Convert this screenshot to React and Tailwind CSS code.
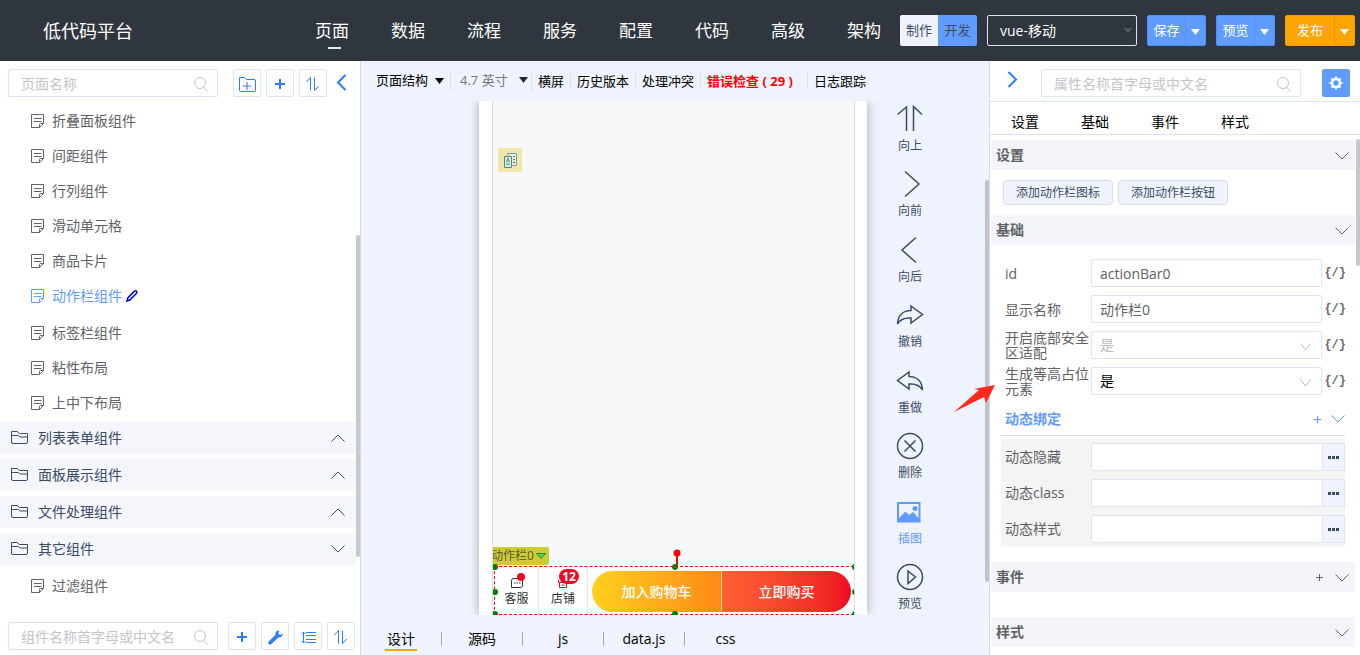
import { useState } from 'react';
import clsx from 'clsx';

const NAV = ['页面', '数据', '流程', '服务', '配置', '代码', '高级', '架构'];

const PAGES = [
  '折叠面板组件',
  '间距组件',
  '行列组件',
  '滑动单元格',
  '商品卡片',
  '动作栏组件',
  '标签栏组件',
  '粘性布局',
  '上中下布局',
];

const GROUPS = [
  { name: '列表表单组件', open: false },
  { name: '面板展示组件', open: false },
  { name: '文件处理组件', open: false },
  { name: '其它组件', open: true, children: ['过滤组件'] },
];

const FILES = ['设计', '源码', 'js', 'data.js', 'css'];
const PROP_TABS = ['设置', '基础', '事件', '样式'];

const BINDINGS = [
  { id: 'bind-hide', label: '动态隐藏' },
  { id: 'bind-class', label: '动态class' },
  { id: 'bind-style', label: '动态样式' },
];

/* Icons */
function Svg({ w, h, children, className, sw = 1 }) {
  return (
    <svg
      width={w}
      height={h}
      viewBox={`0 0 ${w} ${h}`}
      fill="none"
      stroke="currentColor"
      strokeWidth={sw}
      className={clsx('shrink-0', className)}
      aria-hidden="true"
    >
      {children}
    </svg>
  );
}

const NoteIcon = () => (
  <Svg w={13} h={14}>
    <path d="M8.500 13.500h-8V.5h12V9.500zV10.500q0-1 1-1h3M3 4.500h7.500M3 7.500h7.500" />
  </Svg>
);

const FolderIcon = () => (
  <Svg w={17} h={14}>
    <path d="M.5 12V.500h5.500l2.500 2h8v8.500q0 1.500-1.500 1.500H2Q.5 12.500.5 11zM.5 4.500h7l1.500 1.500h7.500" />
  </Svg>
);

const SearchIcon = ({ className }) => (
  <Svg w={14} h={15} className={className}>
    <circle cx="6" cy="6" r="5.500" />
    <path d="M9.500 10l4 4.500" />
  </Svg>
);

const PlusIcon = () => (
  <Svg w={10} h={10} sw={2}>
    <path d="M5 0v10M0 5h10" />
  </Svg>
);

const ThinPlus = () => (
  <Svg w={7} h={7}>
    <path d="M3.500 0v7M0 3.500h7" />
  </Svg>
);

const FolderAddIcon = () => (
  <Svg w={17} h={15}>
    <path d="M3 14.500h-1q-1.500 0-1.500-1.500V.5h5l2 2h7.500q1.500 0 1.500 1.500V13q0 1.500-1.500 1.500H2M8 5v8M4 9h8" />
  </Svg>
);

const SortIcon = () => (
  <Svg w={14} h={14}>
    <path d="M.5 5L4.500.5V13.500M8.500.5v13L13 9" />
  </Svg>
);

const WrenchIcon = () => (
  <Svg w={15} h={15}>
    <path
      d="M14.500 3.500l-2.500 1.500-1.800-1.800L11.500.5C9 0 6.800 2 7.500 4.700L.8 11.400a1.700 1.700 0 0 0 2.600 2.600l6.800-6.600c2.700.6 4.800-1.500 4.300-3.900z"
      fill="currentColor"
      stroke="none"
    />
  </Svg>
);

const LinesIcon = () => (
  <Svg w={15} h={13}>
    <path d="M5 1.500h10M5 4.500h10M5 8.500h10M5 11.500h10M2.500 1v11M.5 3l2-2 2 2M.5 10l2 2 2-2" />
  </Svg>
);

const Chevron = ({ up, className }) => (
  <Svg w={14} h={8} className={className}>
    <path d={up ? 'M.5 7.500L7 1l6.500 6.500' : 'M.5.5L7 7 13.500.5'} />
  </Svg>
);

const SmallChevron = ({ className }) => (
  <Svg w={11} h={8} className={className}>
    <path d="M.5.5l5 6.500 5-6.500" />
  </Svg>
);

const Caret = ({ className }) => (
  <Svg w={9} h={6} className={className}>
    <path d="M0 0h9L4.500 6z" fill="currentColor" stroke="none" />
  </Svg>
);

const BigArrow = ({ left }) => (
  <Svg w={11} h={17} sw={2}>
    <path d={left ? 'M9.500 1L2 8.500 9.500 16' : 'M1.500 1L9 8.500 1.500 16'} />
  </Svg>
);

const TOOL_ICONS = {
  up: <path d="M1.500 9.500L10.500 2V26M17.500 26V1.500L26 9.500" />,
  right: <path d="M9 1.500L23 14 9 26.500" />,
  left: <path d="M20 1.500L6 14l14 12.500" />,
  redo: <path d="M15 5l11.500 8.500L15 22v-5C9 16.500 4 18.500 1.500 23 2 14.500 7 9.500 15 9.500z" />,
  undo: <path d="M13 5L1.500 13.500 13 22v-5c6-.5 11 1.500 13.500 6C26 14.500 21 9.500 13 9.500z" />,
  remove: (
    <>
      <circle cx="14" cy="14" r="12.500" />
      <path d="M8.500 8.500l11 11M19.500 8.500l-11 11" />
    </>
  ),
  image: (
    <>
      <path d="M2 5h21.500v18.500H2z" strokeWidth="2" />
      <path d="M2 21l7.500-7.500 3.500 3.500 4-3 6.500 7v2.500H2z" fill="currentColor" stroke="none" />
      <circle cx="19" cy="10.500" r="2.500" fill="currentColor" stroke="none" />
    </>
  ),
  play: (
    <>
      <circle cx="14" cy="14" r="12.500" />
      <path d="M12 8l7.500 6-7.500 6.500z" />
    </>
  ),
};

const TOOLS = [
  { name: '向上', icon: 'up' },
  { name: '向前', icon: 'right' },
  { name: '向后', icon: 'left' },
  { name: '撤销', icon: 'redo' },
  { name: '重做', icon: 'undo' },
  { name: '删除', icon: 'remove' },
  { name: '插图', icon: 'image', active: true },
  { name: '预览', icon: 'play' },
];

/* Shared controls */
function SearchBox({ label, className }) {
  return (
    <div className={clsx('relative', className)}>
      <input
        type="text"
        aria-label={label}
        placeholder={label}
        className="block h-7 w-full rounded-xs border border-[#dce3f3] bg-white pl-3 pr-8 text-sm placeholder:text-[#c3c5c9] outline-none"
      />
      <SearchIcon className="absolute right-[10px] top-2 text-[#bfc3ca]" />
    </div>
  );
}

function ToolButton({ label, children }) {
  return (
    <button
      aria-label={label}
      className="flex size-7 shrink-0 items-center justify-center rounded-xs border border-[#dce3f3] bg-white pt-[2px] text-[#2d7bff]"
    >
      {children}
    </button>
  );
}

function SplitButton({ label, orange }) {
  return (
    <div
      className={clsx(
        'flex h-[31px] shrink-0 rounded-xs border text-[13px] text-white',
        orange ? 'w-[70px] border-[#f59a00] bg-[#ffa500]' : 'w-[59px] border-[#4a90ff] bg-[#609bff]',
      )}
    >
      <button className="flex-1">{label}</button>
      <button
        aria-label={`${label}选项`}
        className={clsx(
          'flex w-5 items-center justify-center border-l pt-[2px]',
          orange ? 'border-[#e59400]' : 'border-[#4a90ff]',
        )}
      >
        <Caret />
      </button>
    </div>
  );
}

/* Header */
function Header() {
  const [active, setActive] = useState('页面');

  return (
    <header className="flex h-[61px] shrink-0 items-center bg-[#2f363e] pl-[43px] pr-[5px] text-white">
      <h1 className="text-lg">低代码平台</h1>
      <nav className="ml-auto mr-[19px] flex gap-[42px]">
        {NAV.map((item) => (
          <a
            key={item}
            href={`#${item}`}
            onClick={() => setActive(item)}
            className="relative whitespace-nowrap text-[17px]"
          >
            {item}
            {active === item && (
              <span className="absolute -bottom-[6px] left-[13px] h-[2px] w-[13px] bg-[#e3e6f3]" />
            )}
          </a>
        ))}
      </nav>
      <div className="flex shrink-0 gap-[10px]">
        <div className="flex h-[31px] overflow-hidden rounded-xs text-[13px] text-[#3f4b63]">
          <button className="w-[38px] bg-[#eff3fd]">制作</button>
          <button className="w-[39px] bg-[#609bff]">开发</button>
        </div>
        <div className="relative w-[150px]">
          <select
            aria-label="项目类型"
            className="h-[31px] w-full appearance-none rounded-xs border border-[#dce3f3] bg-[#2f363e] pl-3 text-sm text-white"
          >
            <option>vue-移动</option>
          </select>
          <Svg w={8} h={6} sw={2} className="absolute right-[5px] top-3 text-[#5a6068]">
            <path d="M1 1l3 3.500L7 1" />
          </Svg>
        </div>
        <SplitButton label="保存" />
        <SplitButton label="预览" />
        <SplitButton label="发布" orange />
      </div>
    </header>
  );
}

/* Left tree */
function TreeItem({ name, active }) {
  return (
    <li
      className={clsx(
        'flex h-[35px] items-center pl-[31px]',
        active ? 'mb-[2px] text-[#5f9bff]' : 'text-[#606266]',
      )}
    >
      <button className="flex items-center gap-2">
        <NoteIcon />
        <span>{name}</span>
      </button>
      {active && (
        <button aria-label="编辑" className="ml-1 text-[#0000e0]">
          <Svg w={12} h={12} sw={1.5}>
            <path d="M1 11l.8-3L8.500 1.200q1.200-.8 2 0t0 2L3.800 10z" />
          </Svg>
        </button>
      )}
    </li>
  );
}

function Sidebar() {
  return (
    <aside className="flex w-[361px] shrink-0 flex-col border-r border-[#d5d9e0] bg-white">
      <div className="flex items-center gap-[5px] pb-[6px] pl-2 pt-2">
        <SearchBox label="页面名称" className="mr-[10px] w-[210px]" />
        <ToolButton label="新建分组"><FolderAddIcon /></ToolButton>
        <ToolButton label="新建页面"><PlusIcon /></ToolButton>
        <ToolButton label="排序"><SortIcon /></ToolButton>
        <button aria-label="收起" className="-mt-[2px] ml-1 text-[#2d7bff]">
          <BigArrow left />
        </button>
      </div>

      <div className="flex min-h-0 flex-1">
        <div className="flex-1 overflow-hidden text-sm">
          <ul className="pb-[2px]">
            {PAGES.map((name) => (
              <TreeItem key={name} name={name} active={name === '动作栏组件'} />
            ))}
          </ul>
          {GROUPS.map((group) => (
            <section key={group.name} className="mb-[5px]">
              <button className="flex h-8 w-full items-center bg-[#f4f6fb] pl-[11px] pr-[11px] text-[#3b4a66]">
                <FolderIcon />
                <span className="ml-[10px]">{group.name}</span>
                <Chevron up={!group.open} className="ml-auto" />
              </button>
              {group.children && (
                <ul className="pt-[3px]">
                  {group.children.map((name) => (
                    <TreeItem key={name} name={name} />
                  ))}
                </ul>
              )}
            </section>
          ))}
        </div>
        <div className="w-1 pt-[132px]">
          <div className="h-[322px] rounded-xs bg-[#c6c8cb]" />
        </div>
      </div>

      <div className="flex items-center gap-[5px] pb-[5px] pl-2">
        <SearchBox label="组件名称首字母或中文名" className="mr-[5px] w-[210px]" />
        <ToolButton label="新建组件"><PlusIcon /></ToolButton>
        <ToolButton label="工具"><WrenchIcon /></ToolButton>
        <ToolButton label="行距"><LinesIcon /></ToolButton>
        <ToolButton label="组件排序"><SortIcon /></ToolButton>
      </div>
    </aside>
  );
}

/* Canvas */
function Handle({ className }) {
  return <span className={clsx('absolute size-[6px] rounded-full bg-[#008000]', className)} />;
}

function ActionBar() {
  return (
    <div className="relative ml-px flex h-[49px] border border-dashed border-[#ff0000] border-r-0 bg-white">
      <div className="absolute -left-1 -top-5 flex h-[18px] w-[58px] items-center justify-between rounded-r-xs bg-[#cccc33] pr-[3px] text-xs text-[#5a5a30]">
        <span className="whitespace-nowrap">动作栏0</span>
        <Svg w={10} h={6}>
          <path d="M.5.5h9L5 5.500z" fill="#5fd068" stroke="#1d8a35" />
        </Svg>
      </div>
      <Svg w={8} h={18} className="absolute -top-[18px] left-[178px] text-[#ff0000]">
        <circle cx="4" cy="4" r="3.500" fill="currentColor" stroke="none" />
        <path d="M4 4v14" strokeWidth="2" />
      </Svg>

      <button className="relative flex w-11 flex-col items-center border-r border-dotted border-[#d0d0d0] pt-2 text-xs text-[#323233]">
        <Svg w={12} h={12} className="mt-[2px]">
          <path d="M2.500 1.500h7q2 0 2 2v5q0 2-2 2h-9v-7q0-2 2-2z" />
          <path d="M3 6h1.500M5.500 6H7M8 6h1.500" />
        </Svg>
        <span className="leading-5">客服</span>
        <span className="absolute right-[13px] top-[6px] size-2 rounded-full bg-[#ee0a24]" />
      </button>
      <button className="relative flex w-[49px] flex-col items-center border-r border-dotted border-[#d0d0d0] pt-2 text-xs text-[#323233]">
        <Svg w={10} h={12} className="mt-[2px] text-[#ee0a24]">
          <path d="M.5 3v2.500h9V3M1.500 5.500v5h7v-5M3.500 8h3" />
        </Svg>
        <span className="leading-5">店铺</span>
        <span className="absolute right-2 top-[2px] h-[15px] w-5 rounded-full bg-[#ee0a24] text-center text-xs font-bold leading-[15px] text-white">
          12
        </span>
      </button>
      <div className="flex flex-1 pb-[2px] pl-1 pr-[3px] pt-1 text-sm font-medium text-white">
        <button className="flex-1 rounded-l-full border-r border-dotted border-[#ffe0b0] bg-linear-to-r from-[#ffd01e] to-[#ff8917]">
          加入购物车
        </button>
        <button className="flex-1 rounded-r-full bg-linear-to-r from-[#ff6034] to-[#ee0a24]">
          立即购买
        </button>
      </div>

      <Handle className="-left-[3px] -top-[3px]" />
      <Handle className="-left-[3px] top-[22px]" />
      <Handle className="-bottom-[3px] -left-[3px]" />
      <Handle className="-top-[3px] left-[177px]" />
      <Handle className="-bottom-[3px] left-[177px]" />
      <Handle className="-right-1 -top-[3px]" />
      <Handle className="-right-1 top-[22px]" />
      <Handle className="-bottom-[3px] -right-1" />
    </div>
  );
}

function Workspace() {
  return (
    <main className="flex min-w-0 flex-1 flex-col bg-[#eff3fd]">
      <div className="flex h-10 shrink-0 items-center pl-[15px] text-[13px] text-black">
        <button className="flex items-center gap-[7px] whitespace-nowrap">
          页面结构 <Caret />
        </button>
        <div className="relative ml-[6px] w-[82px] border-x border-[#dce0ea]">
          <select aria-label="屏幕尺寸" className="h-4 w-full appearance-none pl-[9px] leading-4 text-[#777]">
            <option>4.7 英寸</option>
          </select>
          <Caret className="absolute right-[3px] top-[6px] text-[#22263a]" />
        </div>
        <div className="flex divide-x divide-[#dce0ea] whitespace-nowrap leading-4">
          <button className="px-[6px]">横屏</button>
          <button className="px-[6px]">历史版本</button>
          <button className="px-[6px]">处理冲突</button>
          <button className="pl-[6px] pr-[14px] font-bold text-[#ff0000]">错误检查 ( 29 )</button>
          <button className="px-[6px]">日志跟踪</button>
        </div>
      </div>

      <div className="grid min-h-0 flex-1 grid-cols-[1fr_388px_1fr_4px] overflow-hidden">
        <div />
        <div className="flex bg-white pl-[13px] pr-3 shadow-[0_0_10px_rgba(0,0,0,0.3)]">
          <div className="flex flex-1 flex-col justify-between overflow-x-clip border-x border-[#dcdcdc] bg-[#f7f8fa]">
            <div className="ml-[5px] mt-[47px] flex size-6 items-center justify-center bg-[#f0e8aa]">
              <Svg w={13} h={15}>
                <path d="M3.500 2.500V.5h9v12H8" fill="#dfe8ea" stroke="#8a9aa0" />
                <path d="M9 3.500h2M9 6.500h2M9 9.500h2" stroke="#4a8f5a" />
                <path d="M.5 3.500h7v11h-7z" fill="#d7ecd2" stroke="#5a8a70" />
                <path d="M2 8h4M2 11h4" stroke="#3f7fa8" />
                <circle cx="4" cy="6" r="1" fill="#3f7fa8" stroke="none" />
              </Svg>
            </div>
            <ActionBar />
          </div>
        </div>
        <div className="flex flex-col items-start justify-between pb-px pl-[29px] pt-1">
          {TOOLS.map((tool) => (
            <button
              key={tool.name}
              className={clsx(
                'flex flex-col items-center gap-[3px] text-xs leading-5',
                tool.active ? 'text-[#5f9bff]' : 'text-[#3b4a66]',
              )}
            >
              <Svg w={28} h={28} sw={1.5}>
                {TOOL_ICONS[tool.icon]}
              </Svg>
              {tool.name}
            </button>
          ))}
        </div>
        <div className="pt-[79px]">
          <div className="h-[402px] rounded-xs bg-[#bfc3cd]" />
        </div>
      </div>

      <div className="flex h-10 shrink-0 items-center pt-2 text-sm text-black">
        {FILES.map((file, i) => (
          <div
            key={file}
            className={clsx(
              'flex h-[14px] w-[81px] items-center justify-center',
              i < FILES.length - 1 && 'border-r border-[#aaa]',
            )}
          >
            <button className={clsx('h-6 w-8 border-y-2 border-transparent', i === 0 && 'border-b-[#ffa500]')}>
              <span className="flex justify-center whitespace-nowrap leading-5">{file}</span>
            </button>
          </div>
        ))}
      </div>
    </main>
  );
}

/* Property panel */
function SectionHead({ title, addable, className }) {
  return (
    <div
      className={clsx(
        'flex h-[30px] items-center bg-[#f4f5fa] pl-[5px] pr-[6px] text-sm font-bold text-[#606266]',
        className,
      )}
    >
      <h2>{title}</h2>
      <div className="ml-auto flex items-center gap-3">
        {addable && (
          <button aria-label="添加事件"><ThinPlus /></button>
        )}
        <button aria-label={`展开${title}`} className="pt-[2px]"><Chevron /></button>
      </div>
    </div>
  );
}

function Field({ id, label, children }) {
  return (
    <div className="flex h-7 items-center">
      <label htmlFor={id} className="w-[86px] shrink-0 text-sm leading-[15px] text-[#606266]">
        {label}
      </label>
      {children}
      <button
        aria-label={`${label}表达式`}
        className="ml-[2px] shrink-0 whitespace-nowrap font-['Liberation_Mono',monospace] text-xs font-bold text-[#666]"
      >
        {'{/}'}
      </button>
    </div>
  );
}

function SelectField({ id, label, disabled }) {
  return (
    <Field id={id} label={label}>
      <div className="relative min-w-0 flex-1">
        <select
          id={id}
          disabled={disabled}
          className={clsx(
            'block h-7 w-full appearance-none rounded-xs border border-[#dce3f3] bg-white pl-2 text-sm opacity-100',
            disabled ? 'text-[#b8bbc0]' : 'text-black',
          )}
        >
          <option>是</option>
        </select>
        <SmallChevron className="absolute right-[11px] top-3 text-[#b8bbc0]" />
      </div>
    </Field>
  );
}

const FIELD_INPUT =
  'h-7 min-w-0 flex-1 rounded-xs border border-[#dce3f3] bg-white pl-2 text-sm text-[#606266]';

function Properties() {
  return (
    <aside className="relative flex w-[371px] shrink-0 flex-col border-l border-[#d5d9e0] bg-white">
      <div className="flex h-[41px] shrink-0 items-center border-b border-[#dce3f0] pl-[17px] pr-[10px] pt-1">
        <button aria-label="展开" className="-mt-2 text-[#2d7bff]">
          <BigArrow />
        </button>
        <SearchBox label="属性名称首字母或中文名" className="ml-[23px] mr-[21px] flex-1" />
        <button
          aria-label="属性设置"
          className="flex size-7 items-center justify-center rounded-xs bg-[#609bff] text-white"
        >
          <Svg w={14} h={14}>
            <circle cx="7" cy="7" r="4" strokeWidth="2.500" />
            <path
              d="M7 .5v2.500M7 11v2.500M.5 7H3M11 7h2.500M2.500 2.500L4 4M10 10l1.500 1.500M2.500 11.500L4 10M10 4l1.500-1.500"
              strokeWidth="2"
            />
          </Svg>
        </button>
      </div>
      <div className="flex h-[33px] shrink-0 items-center border-b border-[#dce3f0] pt-[7px] text-sm text-black">
        {PROP_TABS.map((tab) => (
          <button key={tab} className="w-[70px]">{tab}</button>
        ))}
      </div>

      <div className="flex min-h-0 flex-1">
        <div className="min-w-0 flex-1 overflow-hidden pl-px">
          <SectionHead title="设置" className="mt-[5px]" />
          <div className="flex gap-[5px] py-[10px] pl-3 text-xs text-[#3b4a66]">
            <button className="h-[25px] w-[110px] rounded-sm border border-[#d9dde4] bg-[#eff3fd]">
              添加动作栏图标
            </button>
            <button className="h-[25px] w-[110px] rounded-sm border border-[#d9dde4] bg-[#eff3fd]">
              添加动作栏按钮
            </button>
          </div>

          <SectionHead title="基础" />
          <div className="flex flex-col gap-2 pb-2 pl-[14px] pr-[9px] pt-[14px]">
            <Field id="prop-id" label="id">
              <input id="prop-id" type="text" defaultValue="actionBar0" className={FIELD_INPUT} />
            </Field>
            <Field id="prop-name" label="显示名称">
              <input id="prop-name" type="text" defaultValue="动作栏0" className={FIELD_INPUT} />
            </Field>
            <SelectField id="prop-safe" label="开启底部安全区适配" disabled />
            <SelectField id="prop-holder" label="生成等高占位元素" />
          </div>

          <div className="ml-[10px] mr-[10px]">
            <div className="flex h-[33px] items-center border-b border-[#d9dbe6] pl-1 text-[#5f9bff]">
              <h3 className="text-sm font-bold">动态绑定</h3>
              <button aria-label="添加绑定" className="ml-auto mr-[10px]"><ThinPlus /></button>
              <button aria-label="展开动态绑定"><Chevron /></button>
            </div>
            <div className="mt-[3px] flex flex-col gap-2 bg-[#f4f4f4] py-1">
              {BINDINGS.map(({ id, label }) => (
                <div key={id} className="flex items-center">
                  <label htmlFor={id} className="w-[90px] shrink-0 pl-1 text-sm text-[#606266]">
                    {label}
                  </label>
                  <input
                    id={id}
                    type="text"
                    className="h-7 min-w-0 flex-1 rounded-l-xs border border-[#dce3f3] bg-white px-2 text-sm"
                  />
                  <button
                    aria-label={`选择${label}`}
                    className="flex h-7 w-[22px] items-center justify-center rounded-r-xs border border-l-0 border-[#dce3f3] bg-[#eff3fd] text-[#3b4a66]"
                  >
                    <Svg w={11} h={3}>
                      <path d="M0 1.500h3M4 1.500h3M8 1.500h3" strokeWidth="3" />
                    </Svg>
                  </button>
                </div>
              ))}
            </div>
          </div>

          <SectionHead title="事件" addable className="mt-[15px]" />
          <SectionHead title="样式" className="mt-[25px]" />
        </div>
        <div className="w-[5px] pl-px pt-1">
          <div className="h-[127px] rounded-xs bg-[#c6c8cb]" />
        </div>
      </div>

      {/* pointer to the placeholder field */}
      <Svg w={41} h={28} className="pointer-events-none absolute -left-9 top-[323px]">
        <path d="M0 28L25 6l-5-1L41 1 32 19l-2-6z" fill="#ff2a1a" stroke="none" />
      </Svg>
    </aside>
  );
}

export default function App() {
  return (
    <div className="flex h-screen flex-col overflow-hidden font-['Open_Sans','Noto_Sans_CJK_SC',sans-serif]">
      <Header />
      <div className="flex min-h-0 flex-1">
        <Sidebar />
        <Workspace />
        <Properties />
      </div>
    </div>
  );
}
